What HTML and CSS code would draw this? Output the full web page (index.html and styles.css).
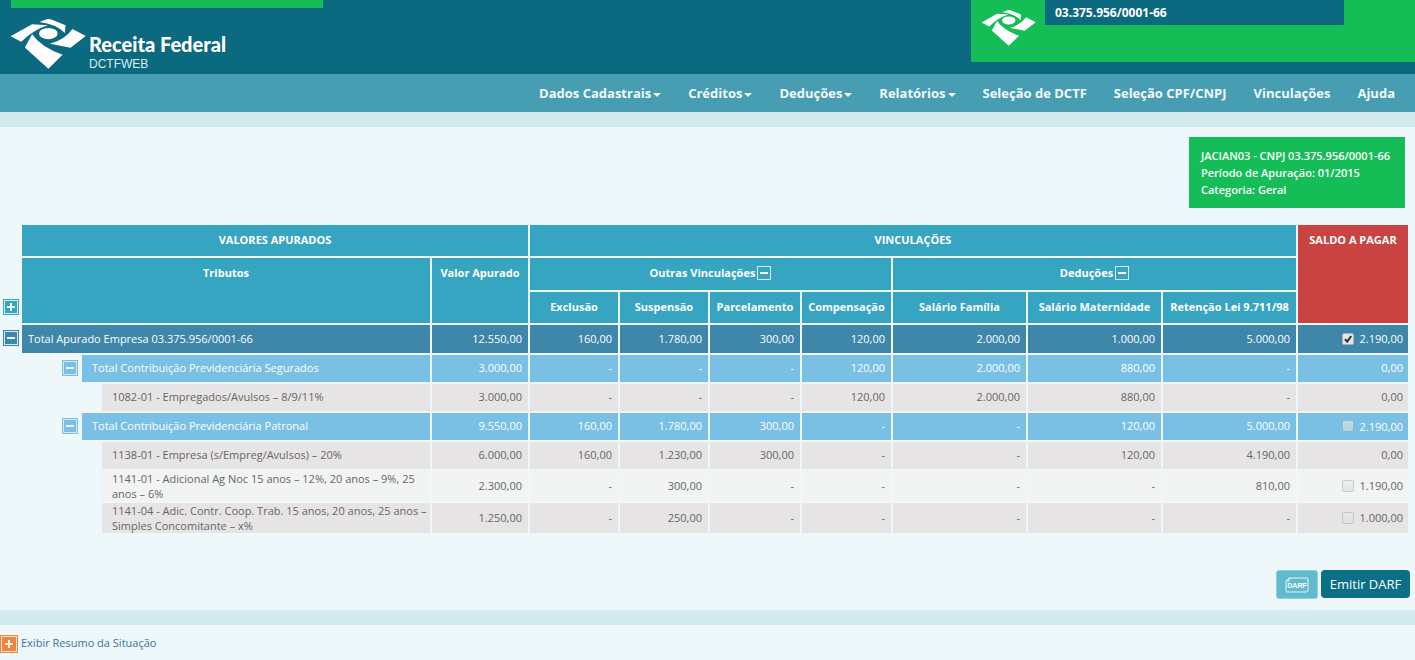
FILE: index.html
```
<!DOCTYPE html>
<html lang="pt-BR">
<head>
<meta charset="utf-8">
<title>DCTFWEB - Receita Federal</title>
<link rel="stylesheet" href="styles.css">
</head>
<body>
<svg class="sprite" aria-hidden="true">
  <symbol id="eagle" viewBox="0 0 228 151">
    <path d="M1 52 66 16 114 19Q72 31 33 69Z"/>
    <path d="M88 9 112 0 122 1 167 19 165 42Q138 15 88 9Z"/>
    <ellipse cx="115" cy="44" rx="28" ry="17"/>
    <path d="M188 30 228 51 182 87 120 75Q165 62 188 30Z"/>
    <path d="M66 46Q92 84 158 108L115 150 44 86Z"/>
  </symbol>
</svg>

<header class="top">
  <div class="brand">
    <div class="brand-bar"></div>
    <div class="brand-row">
      <svg class="brand-logo" role="img" aria-label="Receita Federal"><use href="#eagle"/></svg>
      <div class="brand-text">
        <strong class="brand-name">Receita Federal</strong>
        <span class="brand-app">DCTFWEB</span>
      </div>
    </div>
  </div>
  <div class="user">
    <svg class="user-logo" aria-hidden="true"><use href="#eagle"/></svg>
    <div class="user-id">03.375.956/0001-66</div>
  </div>
</header>

<nav class="menu">
  <a href="#" class="drop">Dados Cadastrais</a>
  <a href="#" class="drop">Créditos</a>
  <a href="#" class="drop">Deduções</a>
  <a href="#" class="drop">Relatórios</a>
  <a href="#">Seleção de DCTF</a>
  <a href="#">Seleção CPF/CNPJ</a>
  <a href="#">Vinculações</a>
  <a href="#">Ajuda</a>
</nav>
<div class="band"></div>

<main>
  <div class="info">
    <div>JACIAN03 - CNPJ 03.375.956/0001-66</div>
    <div>Período de Apuração: 01/2015</div>
    <div>Categoria: Geral</div>
  </div>

  <table class="grid">
    <colgroup>
      <col class="c-gutter"><col class="c-indent1"><col class="c-indent2"><col>
      <col class="c-value"><col class="c-link"><col class="c-link"><col class="c-parcel"><col class="c-comp">
      <col class="c-ded"><col class="c-ded"><col class="c-ded"><col class="c-balance">
    </colgroup>
    <thead>
      <tr class="h">
        <td></td>
        <th colspan="4">VALORES APURADOS</th>
        <th colspan="7">VINCULAÇÕES</th>
        <th class="balance" rowspan="3">SALDO A PAGAR</th>
      </tr>
      <tr class="h h-mid">
        <td></td>
        <th colspan="3" rowspan="2">Tributos</th>
        <th rowspan="2">Valor Apurado</th>
        <th colspan="4"><span class="group">Outras Vinculações<button class="mini" aria-label="Recolher Outras Vinculações"></button></span></th>
        <th colspan="3"><span class="group">Deduções<button class="mini" aria-label="Recolher Deduções"></button></span></th>
      </tr>
      <tr class="h">
        <td class="tog"><button class="toggle plus t-head" aria-label="Expandir tudo"></button></td>
        <th>Exclusão</th><th>Suspensão</th><th>Parcelamento</th><th>Compensação</th>
        <th>Salário Família</th><th>Salário Maternidade</th><th>Retenção Lei 9.711/98</th>
      </tr>
    </thead>
    <tbody>
      <tr class="total">
        <td class="tog"><button class="toggle t-total" aria-label="Recolher total"></button></td>
        <td class="name" colspan="3">Total Apurado Empresa 03.375.956/0001-66</td>
        <td>12.550,00</td><td>160,00</td><td>1.780,00</td><td>300,00</td><td>120,00</td><td>2.000,00</td><td>1.000,00</td><td>5.000,00</td>
        <td class="bal"><label><input type="checkbox" checked>2.190,00</label></td>
      </tr>
      <tr class="sub">
        <td class="tog"></td>
        <td class="tog"><button class="toggle t-sub" aria-label="Recolher Segurados"></button></td>
        <td class="name" colspan="2">Total Contribuição Previdenciária Segurados</td>
        <td>3.000,00</td><td>-</td><td>-</td><td>-</td><td>120,00</td><td>2.000,00</td><td>880,00</td><td>-</td>
        <td class="bal">0,00</td>
      </tr>
      <tr class="item">
        <td class="tog"></td><td class="tog" colspan="2"></td>
        <td class="name">1082-01 - Empregados/Avulsos – 8/9/11%</td>
        <td>3.000,00</td><td>-</td><td>-</td><td>-</td><td>120,00</td><td>2.000,00</td><td>880,00</td><td>-</td>
        <td class="bal">0,00</td>
      </tr>
      <tr class="sub">
        <td class="tog"></td>
        <td class="tog"><button class="toggle t-sub" aria-label="Recolher Patronal"></button></td>
        <td class="name" colspan="2">Total Contribuição Previdenciária Patronal</td>
        <td>9.550,00</td><td>160,00</td><td>1.780,00</td><td>300,00</td><td>-</td><td>-</td><td>120,00</td><td>5.000,00</td>
        <td class="bal"><label><input type="checkbox" disabled>2.190,00</label></td>
      </tr>
      <tr class="item">
        <td class="tog"></td><td class="tog" colspan="2"></td>
        <td class="name">1138-01 - Empresa (s/Empreg/Avulsos) – 20%</td>
        <td>6.000,00</td><td>160,00</td><td>1.230,00</td><td>300,00</td><td>-</td><td>-</td><td>120,00</td><td>4.190,00</td>
        <td class="bal">0,00</td>
      </tr>
      <tr class="item long alt">
        <td class="tog"></td><td class="tog" colspan="2"></td>
        <td class="name">1141-01 - Adicional Ag Noc 15 anos – 12%, 20 anos – 9%, 25 anos – 6%</td>
        <td>2.300,00</td><td>-</td><td>300,00</td><td>-</td><td>-</td><td>-</td><td>-</td><td>810,00</td>
        <td class="bal"><label><input type="checkbox" disabled>1.190,00</label></td>
      </tr>
      <tr class="item long">
        <td class="tog"></td><td class="tog" colspan="2"></td>
        <td class="name">1141-04 - Adic. Contr. Coop. Trab. 15 anos, 20 anos, 25 anos – Simples Concomitante – x%</td>
        <td>1.250,00</td><td>-</td><td>250,00</td><td>-</td><td>-</td><td>-</td><td>-</td><td>-</td>
        <td class="bal"><label><input type="checkbox" disabled>1.000,00</label></td>
      </tr>
    </tbody>
  </table>

  <div class="actions">
    <button class="btn-icon" aria-label="DARF">
      <svg width="24" height="16" viewBox="0 0 24 16">
        <path d="M4 1H22Q23 1 23 2V13Q23 15 21 15H2Q1 15 1 13V4Z" fill="none" stroke="#e4f5f8"/>
        <path d="M1 4H4V1" fill="none" stroke="#e4f5f8"/>
        <text x="12" y="11" class="darf">DARF</text>
      </svg>
    </button>
    <button class="btn">Emitir DARF</button>
  </div>
</main>

<div class="band"></div>
<footer class="summary">
  <a href="#"><span class="toggle plus t-orange"></span>Exibir Resumo da Situação</a>
</footer>
</body>
</html>
```

FILE: styles.css
```
* { box-sizing: border-box; }

body {
  margin: 0;
  background: #eef7fa;
  color: #666;
  font: 11px/15px "Open Sans", "Noto Sans", sans-serif;
}

button { font: inherit; padding: 0; border: 0; cursor: pointer; }

.sprite { position: absolute; width: 0; height: 0; }

/* header */
.top {
  display: flex;
  justify-content: space-between;
  align-items: flex-start;
  height: 74px;
  background: #0b6980;
  color: #fff;
}
.brand { padding-left: 10px; }
.brand-bar { width: 312px; height: 8px; margin-left: 1px; background: #15bd57; }
.brand-row { display: flex; gap: 3px; padding-top: 11px; }
.brand-logo { width: 76px; height: 50px; fill: #fff; }
.brand-text { display: flex; flex-direction: column; padding-top: 13px; }
.brand-name { font: 900 20px/25px Lato, "Open Sans", sans-serif; }
.brand-app { font: 12px/14px "Liberation Sans", Arial, sans-serif; color: #d8ecf1; }

.user { display: flex; align-items: flex-start; width: 444px; height: 62px; background: #15bd57; }
.user-logo { width: 55px; height: 36px; margin: 10px 9px 0 10px; fill: #fff; }
.user-id {
  width: 299px;
  padding: 0 10px;
  background: #0b6980;
  font-size: 12px;
  font-weight: 700;
  line-height: 25px;
}

/* menu */
.menu {
  display: flex;
  justify-content: flex-end;
  gap: 27px;
  padding: 0 20px;
  background: #479db2;
}
.menu a { color: #f2fafb; font-size: 13px; font-weight: 700; line-height: 38px; text-decoration: none; }
.drop::after {
  content: "";
  display: inline-block;
  margin-left: 2px;
  vertical-align: 1px;
  border: 4px solid transparent;
  border-top-color: currentColor;
  border-bottom: 0;
}

.band { height: 15px; background: #d3eaef; }

/* content */
.info {
  width: fit-content;
  min-width: 216px;
  margin: 10px 10px 15px auto;
  padding: 10px 12px;
  background: #15bd57;
  color: #fff;
  font-weight: 600;
  line-height: 17px;
}

.grid {
  width: calc(100% - 5px);
  table-layout: fixed;
  border-spacing: 2px;
}
.c-gutter, .c-indent2 { width: 18px; }
.c-indent1 { width: 58px; }
.c-value { width: 96px; }
.c-link { width: 88px; }
.c-parcel { width: 90px; }
.c-comp { width: 89px; }
.c-ded { width: 133px; }
.c-balance { width: 110px; }

.grid th {
  padding: 7px 0;
  vertical-align: top;
  background: #36a5c2;
  color: #fff;
  font-weight: 700;
}
.grid th.balance { background: #c94343; }
.grid td { padding: 0 6px 2px; text-align: right; }
.grid td.name { text-align: left; }
.grid td.bal { padding-right: 5px; }
.grid td.tog { padding: 0 1px 2px; background: none; }
.grid .sub td.tog { padding-right: 2px; }

.h { height: 31px; }
.h-mid { height: 32px; }
.total { height: 28px; color: #fff; font-weight: 500; }
.total td { background: #3e86aa; }
.sub { height: 27px; color: #fff; font-weight: 500; }
.sub td { background: #79c0e4; }
.item { height: 27px; }
.item td { background: #e6e4e5; }
.alt td { background: #f1f4f3; }
.grid .sub .name { padding-left: 10px; }
.grid .item .name { padding: 0 2px 2px 10px; }
.grid .long .name { padding-bottom: 0; }

.group { display: inline-flex; align-items: center; gap: 2px; }
.mini {
  width: 14px;
  height: 14px;
  border: 1px solid #d5edf3;
  background: linear-gradient(#fff, #fff) center / 8px 2px no-repeat;
}

.toggle {
  --tone: #3e86aa;
  display: block;
  width: 16px;
  height: 16px;
  margin-left: auto;
  border: 1px solid var(--tone);
  outline: 1px solid #d5e9f1;
  outline-offset: -2px;
  background: linear-gradient(#eef4f6, #eef4f6) center / 8px 2px no-repeat var(--tone);
}
.plus {
  background:
    linear-gradient(#eef4f6, #eef4f6) center / 8px 2px no-repeat,
    linear-gradient(#eef4f6, #eef4f6) center / 2px 8px no-repeat,
    var(--tone);
}
.t-head { --tone: #36a5c2; }
.t-sub { --tone: #79c0e4; }
.t-orange { --tone: #f58235; width: 18px; height: 18px; margin: 0; }

.bal label { display: inline-flex; align-items: center; gap: 6px; vertical-align: middle; }
.bal input {
  appearance: none;
  width: 12px;
  height: 12px;
  margin: 0;
  border: 1px solid #b0b0b0;
  border-radius: 2px;
  background: linear-gradient(#eee, #ddd);
}
.bal input:disabled { opacity: 0.6; }
.bal input:checked {
  background: url("data:image/svg+xml,%3Csvg xmlns='http://www.w3.org/2000/svg' viewBox='0 0 10 10'%3E%3Cpath d='M2 5.2 4.2 7.6 8.2 2' fill='none' stroke='%23333' stroke-width='2'/%3E%3C/svg%3E") center / 10px no-repeat #e6e6e6;
}

.actions { display: flex; justify-content: flex-end; align-items: flex-start; gap: 3px; padding: 35px 5px 11px; }
.btn-icon {
  display: flex;
  align-items: center;
  justify-content: center;
  width: 42px;
  height: 29px;
  border: 1px solid #8fd0dc;
  border-radius: 3px;
  background: #62bacd;
}
.darf { fill: #fff; font: 700 7px "Liberation Sans", sans-serif; text-anchor: middle; }
.btn { min-width: 89px; height: 28px; border-radius: 4px; background: #0b6f88; color: #fff; font-size: 13px; }

.summary { padding: 10px 0 7px; }
.summary a { display: flex; align-items: flex-start; gap: 3px; width: fit-content; color: #41719a; line-height: 16px; text-decoration: none; }
```
